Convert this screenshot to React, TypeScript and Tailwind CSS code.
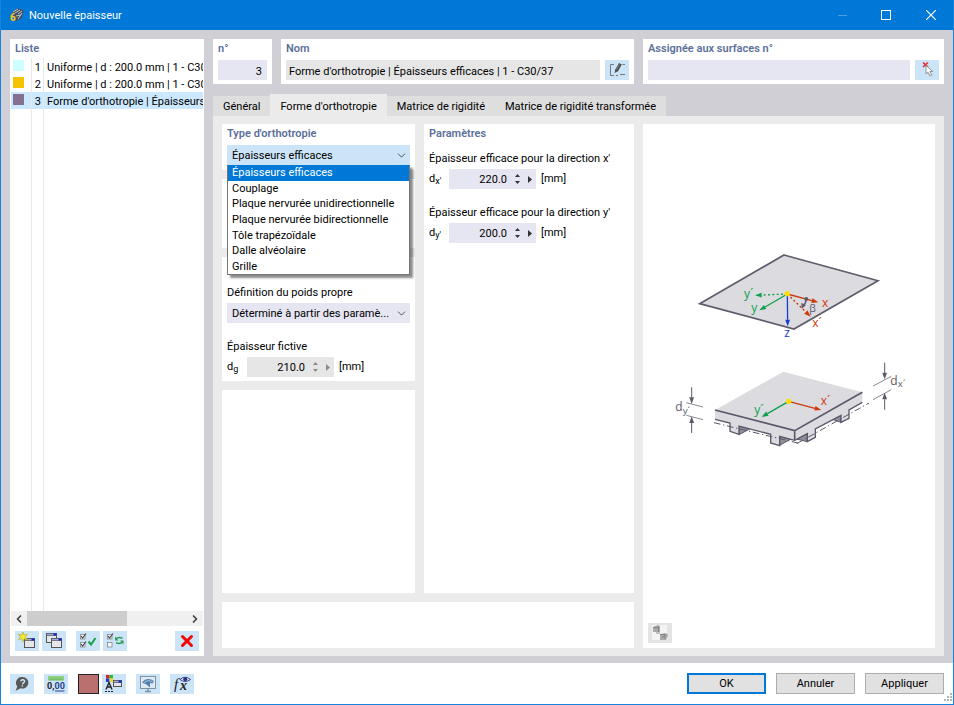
import { useState, type ReactNode } from "react";
import { ChevronDown, ChevronLeft, ChevronRight, X } from "lucide-react";

const THICKNESSES = [
  { id: 1, color: "bg-[#ccffff]", name: "Uniforme | d : 200.0 mm | 1 - C30/37" },
  { id: 2, color: "bg-[#f5c400]", name: "Uniforme | d : 200.0 mm | 1 - C30/37" },
  { id: 3, color: "bg-[#85718f]", name: "Forme d'orthotropie | Épaisseurs efficaces | 1 - C30/37" },
];

const ORTHOTROPY_TYPES = [
  "Épaisseurs efficaces",
  "Couplage",
  "Plaque nervurée unidirectionnelle",
  "Plaque nervurée bidirectionnelle",
  "Tôle trapézoïdale",
  "Dalle alvéolaire",
  "Grille",
];

const TABS = [
  "Général",
  "Forme d'orthotropie",
  "Matrice de rigidité",
  "Matrice de rigidité transformée",
];

function Panel({ title, className = "", children }: { title?: string; className?: string; children?: ReactNode }) {
  return (
    <section className={`bg-white px-[5px] ${className}`}>
      {title && <h2 className="h-[18px] font-semibold leading-5 text-[#5b6f9b]">{title}</h2>}
      {children}
    </section>
  );
}

function IconButton({ label, className = "bg-[#cce4f7]", children }: { label: string; className?: string; children: ReactNode }) {
  return (
    <button type="button" aria-label={label} className={`flex h-5 w-6 shrink-0 items-center justify-center ${className}`}>
      {children}
    </button>
  );
}

function Field({ id, label, symbol, sub, value, disabled = false }: {
  id: string; label: string; symbol: string; sub: string; value: string; disabled?: boolean;
}) {
  const box = disabled ? "bg-[#e6e6e6]" : "bg-[#e6e6f2]";
  const ink = disabled ? "text-[#8c8c8c]" : "text-[#333]";
  return (
    <div>
      <label htmlFor={id} className="block h-[21px] leading-[21px]">{label}</label>
      <div className="flex h-5 items-center">
        <span className="w-5 shrink-0">{symbol}<sub className="bottom-[-2px] text-[9px]">{sub}</sub></span>
        <div className={`flex h-5 w-[87px] items-center ${box}`}>
          <input id={id} defaultValue={value} disabled={disabled} className="w-[58px] bg-transparent pt-px text-right outline-none" />
          <div className={`flex w-[21px] flex-col items-center gap-1 ${ink}`}>
            <button type="button" aria-label="Augmenter" disabled={disabled}>
              <svg className="block h-[3px] w-[5px]" viewBox="0 0 5 3"><path d="M0 3 2.5 0 5 3z" fill="currentColor" /></svg>
            </button>
            <button type="button" aria-label="Diminuer" disabled={disabled}>
              <svg className="block h-[3px] w-[5px]" viewBox="0 0 5 3"><path d="M0 0 2.5 3 5 0z" fill="currentColor" /></svg>
            </button>
          </div>
          <button type="button" aria-label="Plus d'options" disabled={disabled} className={ink}>
            <svg className="block h-[7px] w-1" viewBox="0 0 4 7"><path d="M0 0 4 3.5 0 7z" fill="currentColor" /></svg>
          </button>
        </div>
        <span className="ml-[5px]">[mm]</span>
      </div>
    </div>
  );
}

function Arrow({ x1, y1, x2, y2, color, dashed = false, width = 4, head = 20 }: {
  x1: number; y1: number; x2: number; y2: number; color: string; dashed?: boolean; width?: number; head?: number;
}) {
  const len = Math.hypot(x2 - x1, y2 - y1);
  const ux = (x2 - x1) / len;
  const uy = (y2 - y1) / len;
  const bx = x2 - ux * head;
  const by = y2 - uy * head;
  const w = head * 0.36;
  return (
    <g>
      <line x1={x1} y1={y1} x2={bx} y2={by} stroke={color} strokeWidth={width} strokeDasharray={dashed ? "6 7" : undefined} />
      <polygon points={`${x2},${y2} ${bx - uy * w},${by + ux * w} ${bx + uy * w},${by - ux * w}`} fill={color} />
    </g>
  );
}

function AxesDiagram() {
  return (
    <svg viewBox="-60 0 780 330" className="block h-[110px] w-[260px] font-['Open_Sans',sans-serif]" fontSize="36">
      <polygon points="315,45 597,122 345,267 62,191" fill="#dcdbe0" stroke="#5f5c6b" strokeWidth="5" />
      <Arrow x1={325} y1={162} x2={228} y2={166} color="#0ea04b" dashed />
      <Arrow x1={325} y1={162} x2={241} y2={211} color="#0ea04b" />
      <Arrow x1={325} y1={162} x2={395} y2={230} color="#cc3a0c" dashed />
      <Arrow x1={325} y1={162} x2={418} y2={187} color="#cc3a0c" />
      <Arrow x1={325} y1={162} x2={326} y2={259} color="#1440cc" />
      <path d="M382 177q-2 14-9 19" fill="none" stroke="#5f5c6b" strokeWidth="5" />
      <polygon points="368,207 367,189 381,195" fill="#5f5c6b" />
      <circle cx="382" cy="177" r="6" fill="#5f5c6b" />
      <circle cx="325" cy="161" r="8" fill="#ffdc00" />
      <g fill="#0ea04b"><text x="195" y="174">y´</text><text x="217" y="216">y</text></g>
      <text x="316" y="290" fill="#1440cc">z</text>
      <g fill="#cc3a0c"><text x="429" y="201">x</text><text x="400" y="261">x´</text></g>
      <text x="391" y="215" fontSize="32" fill="#5f5c6b">β</text>
    </svg>
  );
}

function RibbedPlateDiagram() {
  const ink = "#5a5869";
  return (
    <svg viewBox="0 0 780 330" className="block h-[110px] w-[260px] font-['Open_Sans',sans-serif]" fontSize="36">
      <g fill="#92909b" stroke={ink} strokeWidth="3">
        <path d="M240 228 272 237 240 254z" /><path d="M362 259 394 268 362 286z" />
        <path d="M445 251V275L413 267z" /><path d="M546 196V217L520 208z" />
      </g>
      <path d="M373 65 610 127 610 157 570 180 570 205 546 217 546 196 469 237 469 262 445 275 445 251 407 271 362 259 362 287 335 279 335 253 240 228 240 253 213 244 213 219 168 208 168 180z" fill="#dcdbe0" />
      <path d="M168 208 213 219 213 244 240 253 240 228 335 253 335 279 362 287 362 259 407 271 445 251 445 275 469 262 469 237 546 196 546 217 570 205 570 180 610 157" fill="none" stroke={ink} strokeWidth="4" />
      <path d="M168 180 407 242 610 127M407 242V271" fill="none" stroke={ink} strokeWidth="5" />
      <path d="M165 218 420 280M413 281 630 159" fill="none" stroke={ink} strokeWidth="3" strokeDasharray="20 8 4 8" />
      <g stroke="#8b8994" strokeWidth="3">
        <path d="M82 158 132 171M82 196 132 209M642 108 697 79M642 149 697 119" />
      </g>
      <g>
        <Arrow x1={98} y1={112} x2={98} y2={162} color={ink} width={3} />
        <Arrow x1={98} y1={249} x2={98} y2={199} color={ink} width={3} />
        <Arrow x1={677} y1={38} x2={677} y2={88} color={ink} width={3} />
        <Arrow x1={677} y1={179} x2={677} y2={128} color={ink} width={3} />
      </g>
      <Arrow x1={389} y1={154} x2={308} y2={201} color="#0ea04b" />
      <Arrow x1={389} y1={154} x2={487} y2={180} color="#cc3a0c" />
      <circle cx="389" cy="154" r="8" fill="#ffdc00" />
      <text x="286" y="192" fill="#0ea04b">y´</text>
      <text x="485" y="165" fill="#cc3a0c">x´</text>
      <g fill={ink}>
        <text x="49" y="184">d<tspan dy="8" fontSize="29">y´</tspan></text>
        <text x="694" y="105">d<tspan dy="6" fontSize="29">x´</tspan></text>
      </g>
    </svg>
  );
}

/* ---- toolbar pictograms, drawn on a 20 x 20 grid ---- */

function Glyph({ children }: { children: ReactNode }) {
  return <svg viewBox="0 0 20 20" className="block h-5 w-5" fill="none">{children}</svg>;
}

function MiniWindow({ x, y, w = 10, h = 9 }: { x: number; y: number; w?: number; h?: number }) {
  return (
    <g>
      <rect x={x} y={y} width={w} height={h} fill="#e6e6ea" stroke="#555" />
      <rect x={x} y={y} width={w} height="2" fill="#9db0dd" stroke="#555" strokeWidth=".7" />
      <rect x={x + w - 3} y={y} width="3" height="2" fill="#1521c4" />
    </g>
  );
}

function NewIcon() {
  return (
    <Glyph>
      <MiniWindow x={7.5} y={7.5} />
      <path d="M6 1 7.2 4.2 10.5 3.2 8.4 6 10.5 8.5 7.2 7.8 6 11 4.8 7.8 1.5 8.5 3.6 6 1.5 3.2 4.8 4.2z" fill="#f5e93b" stroke="#b8a60b" strokeWidth=".6" />
    </Glyph>
  );
}

function CopyIcon() {
  return <Glyph><MiniWindow x={2.5} y={2.5} /><MiniWindow x={7.5} y={7.5} /></Glyph>;
}

function Tick({ y, checked = true }: { y: number; checked?: boolean }) {
  return (
    <g>
      <rect x="2.5" y={y} width="4.5" height="4.5" fill="#f4f6f8" stroke="#888" strokeWidth=".8" />
      {checked && <path d={`M3 ${y + 1.5}l1.6 2L8 ${y - 1}`} stroke="#444" strokeWidth="1.1" />}
    </g>
  );
}

function CheckAllIcon() {
  return <Glyph><Tick y={3.5} /><Tick y={11.5} /><path d="M10.5 10.5 13 13.5 17.5 7" stroke="#18a34a" strokeWidth="2" /></Glyph>;
}

function SwapIcon() {
  return (
    <Glyph>
      <Tick y={3.5} /><Tick y={11.5} checked={false} />
      <path d="M10.5 8.5Q13 5.5 17.5 7.2" stroke="#2f9e58" strokeWidth="1.5" /><path d="M10 5.5V9.5H13.5z" fill="#2f9e58" />
      <path d="M18 10.5Q15.5 13.5 11 11.8" stroke="#2f9e58" strokeWidth="1.5" /><path d="M18.5 13.5V9.5H15z" fill="#2f9e58" />
    </Glyph>
  );
}

function HelpIcon() {
  return (
    <Glyph>
      <path d="M10.5 3a6 5.8 0 1 1-2 11.3L3.5 17l1.8-4.6A5.8 5.8 0 0 1 10.5 3z" fill="#585858" />
      <path d="M8.6 7.2q.6-1.6 2.4-1.4 1.8.3 1.5 1.8-.2.9-1.3 1.4-.6.4-.7 1.3M10.3 11.2v1.3" stroke="#cce4f7" strokeWidth="1.5" />
    </Glyph>
  );
}

function UnitsIcon() {
  return (
    <Glyph>
      <rect x="2" y="2" width="16" height="4.5" fill="#8ccf7e" />
      <path d="M4 4.5v2M6 4.5v2M8 4.5v2M10 4.5v2M12 4.5v2M14 4.5v2M16 4.5v2" stroke="#58a34c" strokeWidth=".7" />
      <text x="1" y="15" fontSize="9" fontWeight="700" fill="#222">0,</text>
      <text x="8.5" y="15" fontSize="9" fontWeight="700" fill="#26418f">00</text>
      <path d="M9 17h9.5" stroke="#26418f" />
    </Glyph>
  );
}

function DisplayIcon() {
  return (
    <Glyph>
      <path d="M2 1h3.5v3.5H2z" fill="#e61c1c" /><path d="M5.5 1H9v3.5H5.5z" fill="#25bf2f" />
      <path d="M2 4.5h3.5V8H2z" fill="#2438e8" /><path d="M5.5 4.5H9V8H5.5z" fill="#f0de1c" />
      <path d="M2 15.5 5 8.5 8 15.5M3 13h4" stroke="#222" strokeWidth="1.4" />
      <path d="M1 17.5h9" stroke="#222" strokeDasharray="2 1" />
      <MiniWindow x={9.5} y={6.5} w={8} h={6} />
    </Glyph>
  );
}

function MonitorIcon() {
  return (
    <Glyph>
      <rect x="2.5" y="2.5" width="15" height="12" fill="#dfe9f3" stroke="#7f93a5" />
      <path d="M4 8.5Q9 2.5 16 7L14.5 9.5 12 9v4.5L8.5 10.5z" fill="#5380b0" />
      <path d="M6 8.5Q10 5 14.5 7.5" stroke="#bcd2e6" strokeWidth=".8" />
      <path d="M10 14.5v3M7 17.5h6" stroke="#7f93a5" strokeWidth="1.5" />
    </Glyph>
  );
}

function FunctionIcon() {
  return (
    <Glyph>
      <text x="2" y="15" fontSize="15" fontStyle="italic" fill="#222" className="font-['Liberation_Serif',serif]">f</text>
      <text x="8" y="16" fontSize="14" fontStyle="italic" fontWeight="700" fill="#222" className="font-['Liberation_Serif',serif]">x</text>
      <path d="M8 5.5Q13 1 18.5 5.5 13 9.5 8 5.5z" fill="#dfe4f7" stroke="#28357f" strokeWidth=".9" />
      <circle cx="13.2" cy="5.2" r="2" fill="#28357f" />
    </Glyph>
  );
}

function EditIcon() {
  return (
    <Glyph>
      <path d="M7 4.5H3.5v11H7M9 15.5h2M13 14.5h5M15.5 4.5H18" stroke="#777" />
      <path d="m7.5 13 .8-3.5L12 3l2.8 1.5L11 11.2z" fill="#4a4a4a" />
      <path d="M9.5 9.5 12.5 4.5" stroke="#aaa" strokeWidth=".7" />
    </Glyph>
  );
}

function PickIcon() {
  return (
    <Glyph>
      <path d="m6 2.5 5 4.5M11 2.5 6 7" stroke="#e8212b" strokeWidth="1.5" />
      <path d="M9 5.5V14l2-1.8 2 3.8 1.7-.8-1.9-3.7h2.9z" fill="#fff" stroke="#8a8a8a" strokeWidth=".9" />
    </Glyph>
  );
}

function RenderIcon() {
  return (
    <Glyph>
      <rect x="2" y="2" width="15" height="15" fill="#f4f4f4" />
      <path d="M3 4l5-2 2 1v6H3z" fill="#a9a9a9" /><path d="M10 11l6-1 2 2-2 5h-6z" fill="#a9a9a9" />
      <path d="M3 4.5h6M8.5 4v5M10 11.5h5V16M12 15l3-3" stroke="#7c7c7c" strokeWidth=".8" />
      <path d="M6 9h4v2H6z" fill="#c2c2c2" />
    </Glyph>
  );
}

function AppLogo() {
  return (
    <svg viewBox="0 0 16 16" className="block h-4 w-4" fill="none">
      <path d="M3 5 9 1l6 3-3 8-6 2z" fill="#46505c" />
      <path d="m4 5 5-3M6 6l5-3M9 7l4-3M7 9l5-1M9 12l4-6" stroke="#b9c5d2" />
      <text x="1" y="14" fontSize="10" fontWeight="800" fill="#f5c62b">6</text>
    </svg>
  );
}

export default function App() {
  const [tab, setTab] = useState(1);
  const [selected, setSelected] = useState(3);
  const [type, setType] = useState(0);

  return (
    <div className="flex min-h-screen flex-col border border-t-0 border-[#1883dc] bg-white font-[Roboto,'Open_Sans',sans-serif] text-[11px] leading-4 text-black">
      <header className="flex h-[30px] shrink-0 items-center bg-[#0078d7] pl-2 text-white">
        <AppLogo />
        <h1 className="ml-1 flex-1 pt-px">Nouvelle épaisseur</h1>
        <button type="button" aria-label="Réduire" className="flex w-11 justify-center"><span className="h-px w-[9px] bg-[#4a9fe3]" /></button>
        <button type="button" aria-label="Agrandir" className="flex w-11 justify-center"><span className="size-[10px] border border-white" /></button>
        <button type="button" aria-label="Fermer" className="flex w-[45px] justify-center">
          <svg viewBox="0 0 10 10" className="size-[10px]"><path d="m0 0 10 10M10 0 0 10" stroke="white" strokeWidth="1.2" /></svg>
        </button>
      </header>

      <main className="flex flex-1 gap-[9px] bg-[#d0cfd5] px-[9px] pt-[9px] pb-[7px]">
        <aside className="flex w-[194px] shrink-0 flex-col bg-white px-px">
          <h2 className="mb-px h-[18px] pl-1 font-semibold leading-5 text-[#5b6f9b]">Liste</h2>
          <ul className="flex flex-1 flex-col" role="listbox" aria-label="Liste">
            {THICKNESSES.map((t) => (
              <li
                key={t.id}
                role="option"
                aria-selected={t.id === selected}
                onClick={() => setSelected(t.id)}
                className={`flex h-[17px] leading-[19px] ${t.id === selected ? "bg-[#cce8ff]" : ""}`}
              >
                <span className="flex w-[21px] shrink-0 border-r border-[#e8e8e8] pt-[2px] pl-[2px]"><span className={`size-[11px] ${t.color}`} /></span>
                <span className="w-3 shrink-0 border-r border-[#e8e8e8] pr-[2px] text-right">{t.id}</span>
                <span className="min-w-0 flex-1 overflow-hidden pl-[3px] whitespace-nowrap">{t.name}</span>
              </li>
            ))}
            <li aria-hidden="true" className="flex flex-1">
              <span className="w-[21px] border-r border-[#e8e8e8]" />
              <span className="w-3 border-r border-[#e8e8e8]" />
            </li>
          </ul>
          <div className="flex h-[15px] items-center bg-[#f0f0f0] text-[#444]">
            <button type="button" aria-label="Défiler à gauche" className="flex w-4 justify-center"><ChevronLeft size={12} strokeWidth={3.5} /></button>
            <div className="h-full flex-1"><div className="h-full w-[100px] bg-[#cdcdcd]" /></div>
            <button type="button" aria-label="Défiler à droite" className="flex w-4 justify-center"><ChevronRight size={12} strokeWidth={3.5} /></button>
          </div>
          <div className="flex items-center px-1 py-[5px]">
            <div className="flex gap-[3px]"><IconButton label="Nouveau"><NewIcon /></IconButton><IconButton label="Copier"><CopyIcon /></IconButton></div>
            <div className="ml-[10px] flex flex-1 gap-[3px]"><IconButton label="Tout cocher"><CheckAllIcon /></IconButton><IconButton label="Inverser la sélection"><SwapIcon /></IconButton></div>
            <IconButton label="Supprimer"><X size={18} strokeWidth={4} color="#f00808" /></IconButton>
          </div>
        </aside>

        <div className="flex min-w-0 flex-1 flex-col">
          <div className="flex gap-[9px] pb-[10px]">
            <Panel title="n°" className="w-[59px] pb-1">
              <input aria-label="n°" defaultValue="3" className="mt-[3px] block h-5 w-full bg-[#e6e6f2] pt-[2px] pr-[5px] text-right outline-none" />
            </Panel>
            <Panel title="Nom" className="min-w-0 flex-1 pb-1">
              <div className="mt-[3px] flex gap-[5px]">
                <input aria-label="Nom" readOnly defaultValue="Forme d'orthotropie | Épaisseurs efficaces | 1 - C30/37" className="h-5 min-w-0 flex-1 bg-[#e6e6e6] px-[3px] pt-[2px] outline-none" />
                <IconButton label="Modifier le nom"><EditIcon /></IconButton>
              </div>
            </Panel>
            <Panel title="Assignée aux surfaces n°" className="w-[301px] pb-1">
              <div className="mt-[3px] flex gap-[5px]">
                <input aria-label="Assignée aux surfaces n°" className="h-5 min-w-0 flex-1 bg-[#e6e6f2] px-[3px] outline-none" />
                <IconButton label="Sélectionner les surfaces"><PickIcon /></IconButton>
              </div>
            </Panel>
          </div>

          <div role="tablist" className="flex items-end">
            {TABS.map((t, i) => (
              <button
                key={t}
                type="button"
                role="tab"
                aria-selected={i === tab}
                onClick={() => setTab(i)}
                className={`px-[10px] ${i === tab ? "h-[22px] bg-[#ebebeb] pt-1" : "h-5 bg-[#dedede] pt-[2px]"}`}
              >
                {t}
              </button>
            ))}
          </div>

          <div className="flex flex-1 gap-[9px] bg-[#ebebeb] px-[9px] pt-2 pb-2">
            <div className="flex min-w-0 flex-1 flex-col gap-[9px]">
              <div className="flex flex-1 gap-[9px]">
                <div className="flex w-[193px] shrink-0 flex-col gap-[9px]">
                  <Panel title="Type d'orthotropie" className="pb-[5px]">
                    <div className="relative mt-[3px]">
                      <select
                        aria-label="Type d'orthotropie"
                        value={type}
                        onChange={(e) => setType(Number(e.target.value))}
                        className="block h-5 w-full appearance-none bg-[#cce4f7] px-[5px] pt-[2px] outline-none"
                      >
                        {ORTHOTROPY_TYPES.map((o, i) => <option key={o} value={i}>{o}</option>)}
                      </select>
                      <ChevronDown size={13} strokeWidth={1.5} color="#333" className="pointer-events-none absolute top-1 right-[2px]" />
                      <ul role="listbox" aria-label="Types" className="absolute top-full left-0 z-10 flex h-[110px] w-full flex-col border border-t-0 border-[#777] bg-white leading-[15px] shadow-[3px_3px_2px_rgba(0,0,0,0.45)]">
                        {ORTHOTROPY_TYPES.map((o, i) => (
                          <li
                            key={o}
                            role="option"
                            aria-selected={i === type}
                            onClick={() => setType(i)}
                            className={`flex flex-1 items-center px-1 whitespace-nowrap ${i === type ? "bg-[#0078d7] text-white" : ""}`}
                          >
                            {o}
                          </li>
                        ))}
                      </ul>
                    </div>
                  </Panel>
                  <Panel className="h-[69px]" />
                  <Panel className="flex flex-col gap-[13px] pt-[25px] pb-1">
                    <div>
                      <label htmlFor="weight" className="block h-[21px] leading-[21px]">Définition du poids propre</label>
                      <div className="relative">
                        <select id="weight" className="block h-5 w-full appearance-none bg-[#e6e6f2] px-[5px] pt-[2px] outline-none">
                          <option>Déterminé à partir des paramè...</option>
                        </select>
                        <ChevronDown size={13} strokeWidth={1.5} color="#333" className="pointer-events-none absolute top-1 right-[2px]" />
                      </div>
                    </div>
                    <Field id="dg" label="Épaisseur fictive" symbol="d" sub="g" value="210.0" disabled />
                  </Panel>
                  <Panel className="flex-1" />
                </div>
                <Panel title="Paramètres" className="min-w-0 flex-1">
                  <div className="flex flex-col gap-[13px] pt-[6px]">
                    <Field id="dx" label="Épaisseur efficace pour la direction x'" symbol="d" sub="x'" value="220.0" />
                    <Field id="dy" label="Épaisseur efficace pour la direction y'" symbol="d" sub="y'" value="200.0" />
                  </div>
                </Panel>
              </div>
              <Panel className="h-[46px]" />
            </div>
            <section className="flex w-[292px] shrink-0 flex-col items-center bg-white px-[5px] pt-[116px] pb-[5px]">
              <AxesDiagram />
              <RibbedPlateDiagram />
              <div className="mt-auto self-start">
                <IconButton label="Afficher le rendu" className="bg-[#e4e4e4]"><RenderIcon /></IconButton>
              </div>
            </section>
          </div>
        </div>
      </main>

      <footer className="flex h-[41px] shrink-0 items-center justify-between pl-[9px]">
        <div className="flex items-center gap-[10px]">
          <IconButton label="Aide"><HelpIcon /></IconButton>
          <IconButton label="Unités"><UnitsIcon /></IconButton>
          <div className="flex items-center gap-[3px]">
            <button type="button" aria-label="Couleur" className="h-5 w-[21px] border border-[#222] bg-[#bb7070]" />
            <IconButton label="Affichage"><DisplayIcon /></IconButton>
          </div>
          <IconButton label="Vue"><MonitorIcon /></IconButton>
          <IconButton label="Formule"><FunctionIcon /></IconButton>
        </div>
        <div className="flex h-full items-center gap-[10px]">
          <button type="button" className="h-[21px] w-[79px] border-2 border-[#0078d7] bg-[#e1e1e1] leading-[18px]">OK</button>
          <button type="button" className="h-[21px] w-[79px] border border-[#adadad] bg-[#e1e1e1] pt-px">Annuler</button>
          <div className="flex h-full items-center">
            <button type="button" className="h-[21px] w-[79px] border border-[#adadad] bg-[#e1e1e1] pt-px">Appliquer</button>
            <svg viewBox="0 0 9 9" className="mb-[2px] h-[9px] w-[9px] self-end" fill="#b5b5b5">
              <path d="M6 0h2v2H6zM3 3h2v2H3zM6 3h2v2H6zM0 6h2v2H0zM3 6h2v2H3zM6 6h2v2H6z" />
            </svg>
          </div>
        </div>
      </footer>
    </div>
  );
}
